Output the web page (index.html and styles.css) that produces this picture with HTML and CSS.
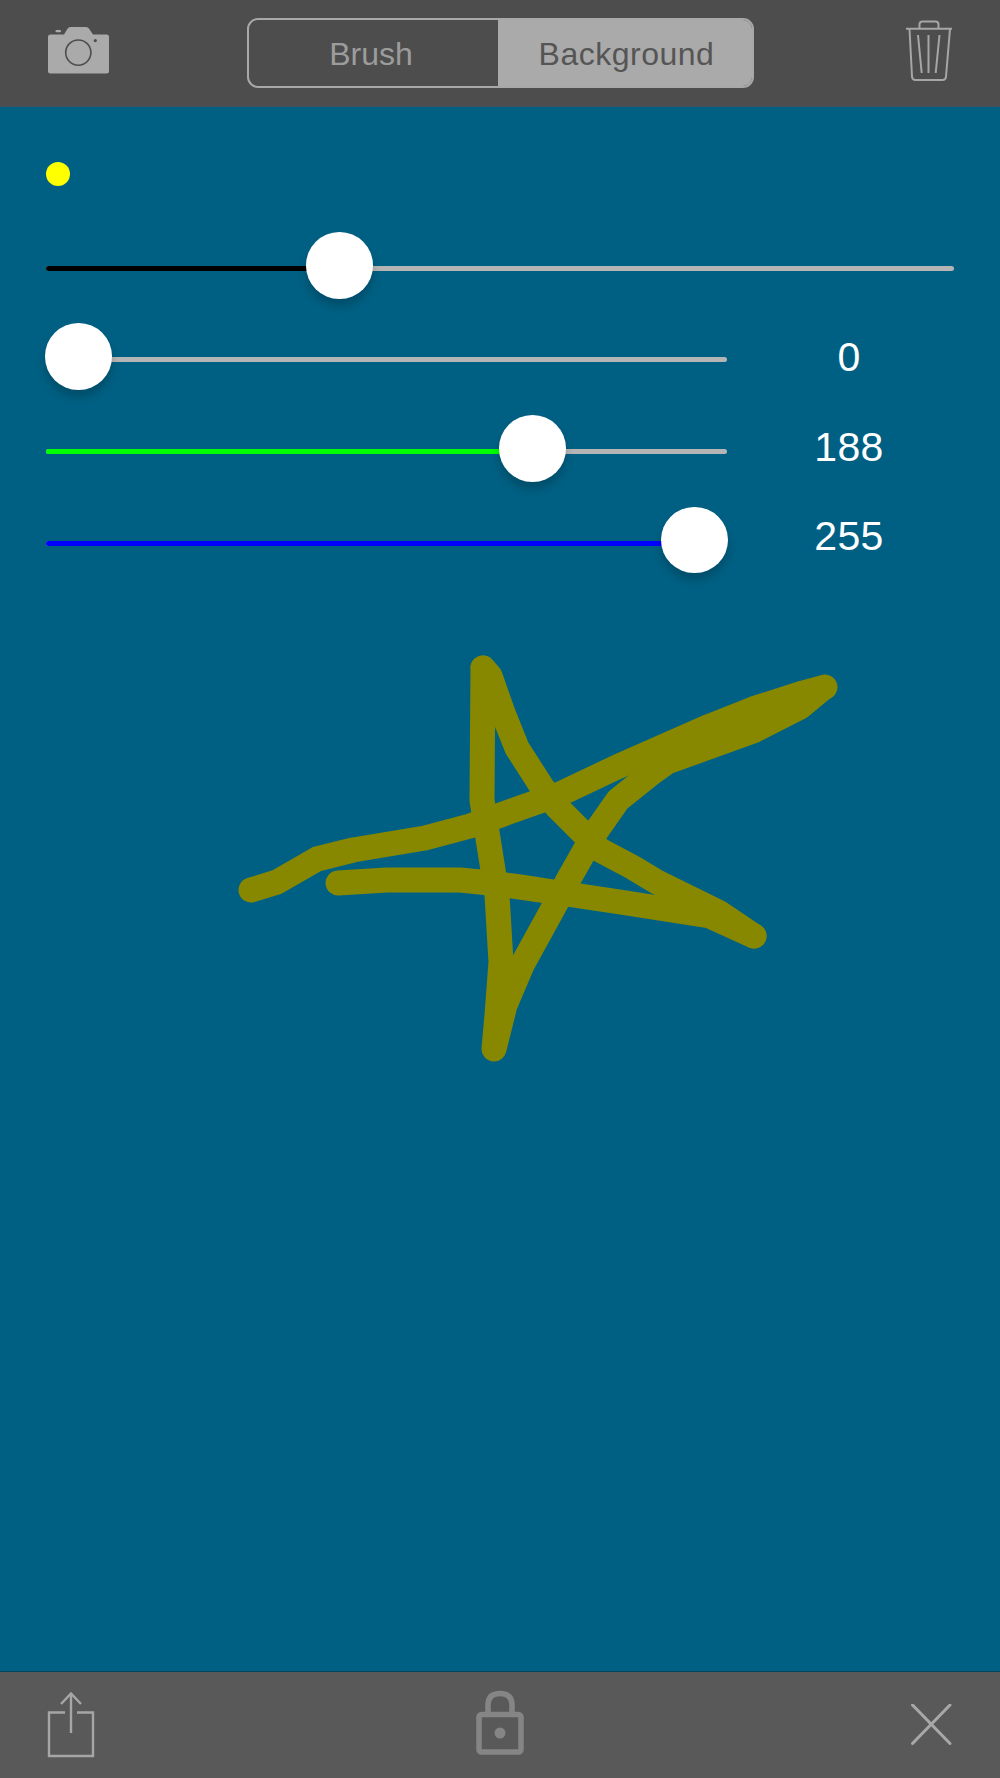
FILE: index.html
```html
<!DOCTYPE html>
<html>
    <head>
        <meta charset="utf-8">
        <title>Brush</title>
        <link rel="stylesheet" href="styles.css">
    </head>
    <body>
        <div class="app">
            <div class="topbar">
                <svg class="icon camera" width="62" height="48" viewBox="48 27 62 48">
                    <path class="cameraBody" d="M50.5 34.5H64L67.5 28.8Q68.6 27 70.6 27H86Q88 27 89.1 28.8L93 34.5H106.5Q109 34.5 109 37V71Q109 73.5 106.5 73.5H50.5Q48 73.5 48 71V37Q48 34.5 50.5 34.5Z"/>
                    <rect class="cameraBody" x="55.5" y="30" width="5.5" height="2.2" rx="1"/>
                    <circle class="cameraLens" cx="78.3" cy="52.6" r="12.6"/>
                    <circle class="cameraDot" cx="95.3" cy="40.6" r="1.6"/>
                </svg>
                <div class="segmented">
                    <div class="segment">Brush</div>
                    <div class="segment selected">Background</div>
                </div>
                <svg class="icon trash" width="46" height="62" viewBox="906 20 46 62">
                    <path class="line" d="M906 28.7H952"/>
                    <path class="line" d="M919.5 28V24.5Q919.5 21.5 922.5 21.5H935.5Q938.5 21.5 938.5 24.5V28"/>
                    <path class="line" d="M909.5 29L912 76.5Q912.2 80 915.5 80H942.5Q945.8 80 946 76.5L950 29"/>
                    <path class="line" d="M918 35L921.7 73M928.5 35V73M939.5 35L935.7 73"/>
                </svg>
            </div>

            <div class="canvas">
                <svg class="drawing" width="1000" height="1564" viewBox="0 107 1000 1564">
                    <polyline points="251,890 277,882 317,859 353,850 425,838 470,826 520,808 560,794 617,767 710,726 753,709 803,693 825,687"/>
                    <polyline points="483,668 482,800 487,832 497,895 501,962 497,1015 494,1049 505,1005 522,965 555,905 567,882 584,852 597,830 618,800 653,772 667,762 753,731 800,707 823,688"/>
                    <polyline points="483,668 490,676 503,713 517,748 542,787 557,807 577,827 600,850 632,867 657,882 720,913 754,936"/>
                    <polyline points="338,883 387,880 460,880 490,883 520,887 560,893 620,902 710,916 754,936"/>
                </svg>

                <div class="dot"></div>

                <div class="row">
                    <div class="slider">
                        <div class="fill black" style="--v: 0.3096"></div>
                        <div class="thumb" style="--v: 0.3096"></div>
                    </div>
                </div>
                <div class="row">
                    <div class="slider short">
                        <div class="thumb" style="--v: 0"></div>
                    </div>
                    <div class="value first">0</div>
                </div>
                <div class="row">
                    <div class="slider short">
                        <div class="fill green" style="--v: 0.737"></div>
                        <div class="thumb" style="--v: 0.737"></div>
                    </div>
                    <div class="value second">188</div>
                </div>
                <div class="row">
                    <div class="slider short">
                        <div class="fill blue" style="--v: 1"></div>
                        <div class="thumb" style="--v: 1"></div>
                    </div>
                    <div class="value third">255</div>
                </div>
            </div>

            <div class="bottombar">
                <svg class="icon share" width="48" height="66" viewBox="47 1692 48 66">
                    <path class="line thick" d="M65 1712.5H49V1756H93V1712.5H77"/>
                    <path class="line thick" d="M71 1733V1694M61 1704L71 1693.5L81 1704"/>
                </svg>
                <svg class="icon lock" width="48" height="65" viewBox="476 1690 48 65">
                    <path class="lockLine" d="M488 1714V1705Q488 1693.5 500 1693.5Q512 1693.5 512 1705V1714"/>
                    <rect class="lockLine" x="479" y="1714.5" width="42" height="37.5" rx="2.5"/>
                    <circle class="lockDot" cx="500" cy="1733" r="5.5"/>
                </svg>
                <svg class="icon close" width="41" height="41" viewBox="911 1704 41 41">
                    <path class="line heavy" d="M912.5 1705L950 1743.5M950 1705L912.5 1743.5"/>
                </svg>
            </div>
        </div>
    </body>
</html>
```

FILE: styles.css
```css
html, body{
    margin: 0;
    padding: 0;
}
.app{
    display: flex;
    flex-direction: column;
    width: 1000px;
    height: 1778px;
    overflow: hidden;
    font-family: "Liberation Sans", Arial, sans-serif;
}
.icon{
    display: block;
}
.line{
    fill: none;
    stroke: #a6a6a6;
    stroke-width: 2;
}
.thick{
    stroke-width: 2.4;
}
.heavy{
    stroke: #a8a8a8;
    stroke-width: 3;
    stroke-linecap: round;
}

/* top bar */
.topbar{
    display: grid;
    grid-template-columns: 1fr auto 1fr;
    align-items: start;
    flex: 0 0 107px;
    padding: 0 48px;
    box-sizing: border-box;
    background: #4d4d4d;
    border-bottom: 1px solid #45545c;
}
.camera{
    margin-top: 27px;
}
.trash{
    justify-self: end;
    margin-top: 20px;
}
.cameraBody{
    fill: #aaaaaa;
}
.cameraLens{
    fill: none;
    stroke: #4d4d4d;
    stroke-width: 1.6;
}
.cameraDot{
    fill: #4d4d4d;
}
.segmented{
    display: flex;
    width: 507px;
    height: 70px;
    margin-top: 18px;
    box-sizing: border-box;
    border: 2.5px solid #a8a8a8;
    border-radius: 11px;
    overflow: hidden;
    font-size: 32px;
}
.segment{
    display: flex;
    align-items: center;
    justify-content: center;
    flex: 0 0 249px;
    padding-right: 4px;
    padding-top: 3px;
    box-sizing: border-box;
    color: #9c9c9c;
}
.segment.selected{
    flex: 1;
    padding-left: 4px;
    padding-right: 0;
    letter-spacing: 0.5px;
    background: #aaaaaa;
    color: #555555;
}

/* main area */
.canvas{
    position: relative;
    flex: 1;
    padding: 55px 46px 0;
    background: #006083;
}
.drawing{
    position: absolute;
    top: 0;
    left: 0;
}
.drawing polyline{
    fill: none;
    stroke: #888800;
    stroke-width: 25;
    stroke-linecap: round;
    stroke-linejoin: round;
}
.dot{
    position: relative;
    width: 24px;
    height: 24px;
    margin-bottom: 36.5px;
    border-radius: 50%;
    background: #ffff00;
}
.row{
    position: relative;
    display: flex;
    align-items: center;
    height: 91.67px;
}
.slider{
    position: relative;
    flex: 1;
    height: 5px;
    border-radius: 3px;
    background: #b5b5b5;
}
.slider.short{
    flex: 0 0 681px;
}
.fill{
    position: absolute;
    top: 0;
    left: 0;
    height: 100%;
    width: calc((100% - 65px) * var(--v) + 32px);
    border-radius: 3px 0 0 3px;
}
.black{
    background: #000000;
}
.green{
    background: #00ff00;
}
.blue{
    background: #0000ff;
}
.thumb{
    position: absolute;
    top: -34px;
    left: calc((100% - 65px) * var(--v) - 1px);
    width: 66.7px;
    height: 66.7px;
    border-radius: 50%;
    background: #ffffff;
    box-shadow: 0 7px 10px rgba(0, 0, 0, 0.2);
}
.value{
    flex: 0 0 210px;
    margin-left: 17px;
    font-size: 41px;
    line-height: 44px;
    letter-spacing: 0.3px;
    text-align: center;
    color: #ffffff;
}
.value.first{
    padding-bottom: 6px;
}
.value.second{
    padding-bottom: 10px;
}
.value.third{
    padding-bottom: 14px;
}

/* bottom bar */
.bottombar{
    display: grid;
    grid-template-columns: 1fr auto 1fr;
    align-items: start;
    flex: 0 0 107px;
    padding: 20px 48px 0;
    box-sizing: border-box;
    background: #595959;
    border-top: 1px solid #00445e;
}
.share{
    margin-left: -1px;
}
.lock{
    margin-top: -2px;
}
.close{
    justify-self: end;
    margin-top: 12px;
}
.lockLine{
    fill: none;
    stroke: #858585;
    stroke-width: 5.5;
}
.lockDot{
    fill: #858585;
}
```
